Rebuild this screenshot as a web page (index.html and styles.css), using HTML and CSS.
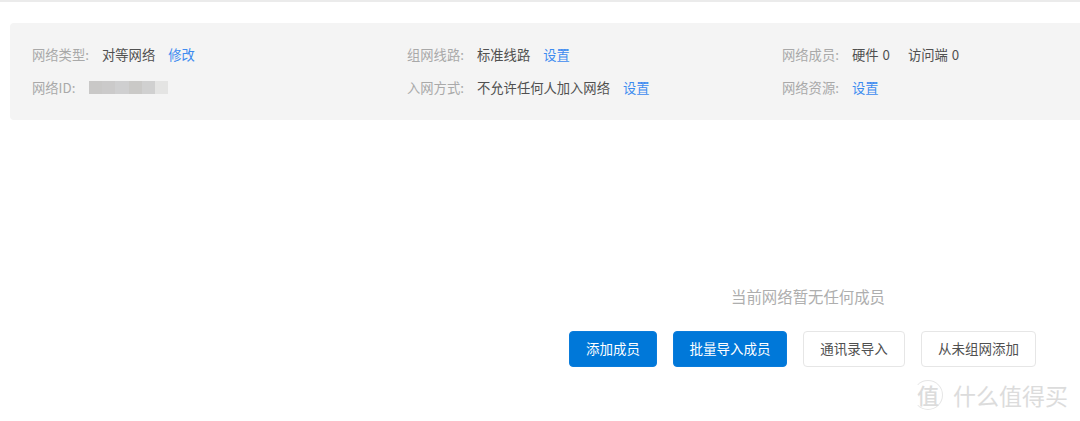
FILE: index.html
```html
<!DOCTYPE html>
<html lang="zh-CN">
<head>
<meta charset="utf-8">
<title>网络详情</title>
<link rel="stylesheet" href="styles.css">
</head>
<body>
<div class="page">
  <section class="info">
    <div class="item"><span class="label">网络类型:</span><span class="value">对等网络</span><a class="link">修改</a></div>
    <div class="item"><span class="label">组网线路:</span><span class="value">标准线路</span><a class="link">设置</a></div>
    <div class="item"><span class="label">网络成员:</span><span class="value count">硬件 0</span><span class="value count second">访问端 0</span></div>
    <div class="item"><span class="label">网络ID:</span><span class="mask"><i class="m1"></i><i class="m2"></i><i class="m3"></i><i class="m4"></i><i class="m5"></i><i class="m6"></i></span></div>
    <div class="item"><span class="label">入网方式:</span><span class="value">不允许任何人加入网络</span><a class="link">设置</a></div>
    <div class="item"><span class="label">网络资源:</span><a class="link flush">设置</a></div>
  </section>
  <section class="empty">
    <p class="empty-text">当前网络暂无任何成员</p>
    <div class="actions">
      <button class="btn primary w88">添加成员</button>
      <button class="btn primary w114">批量导入成员</button>
      <button class="btn w102">通讯录导入</button>
      <button class="btn w115">从未组网添加</button>
    </div>
  </section>
  <div class="watermark">
    <span class="wm-badge">值</span>
    <span class="wm-text">什么值得买</span>
  </div>
</div>
</body>
</html>
```
FILE: styles.css
```css
* { box-sizing: border-box; }
html, body { margin: 0; padding: 0; height: 100%; }
body {
  background: #fff;
  overflow: hidden;
  font-family: "Noto Sans CJK SC", "Liberation Sans", sans-serif;
}
.page {
  position: relative;
  height: 421px;
  border-top: 2px solid #ebebeb;
  padding: 21px 0 0 10px;
}
.info {
  display: grid;
  grid-template-columns: 375px 375px 1fr;
  grid-auto-rows: 33px;
  height: 97px;
  padding: 15px 0 0 22px;
  background: #f4f4f4;
  border-radius: 4px 0 0 4px;
  font-size: 13.3px;
}
.item { display: flex; align-items: center; white-space: nowrap; min-width: 0; }
.label { width: 70px; color: #a9a9a9; }
.value { color: #505050; }
.value.count { word-spacing: 1px; }
.value.second { margin-left: 18px; }
.link { margin-left: 13px; color: #3d8bf0; }
.link.flush { margin-left: 0; }
.mask { display: flex; margin-left: -13px; }
.mask i { display: block; width: 13.2px; height: 13px; }
.m1 { background: #c9c8c7; }
.m2 { background: #cbcaca; }
.m3 { background: #cfcfd0; }
.m4 { background: #cac9c7; }
.m5 { background: #d0d0d0; }
.m6 { background: #e4e4e3; }
.empty {
  display: flex;
  flex-direction: column;
  align-items: flex-end;
  margin-top: 166px;
  padding-right: 44px;
}
.empty-text {
  margin: 0 151px 0 0;
  height: 20px;
  line-height: 20px;
  font-size: 15.4px;
  color: #aeaeae;
}
.actions { display: flex; gap: 16px; margin-top: 25px; }
.btn {
  height: 36px;
  padding: 0 0 2px;
  border: 1px solid #e6e6e6;
  border-radius: 4px;
  background: #fff;
  color: #505050;
  font: inherit;
  font-size: 13.5px;
}
.btn.primary { background: #0078d9; border-color: #0a7cdb; color: #fff; }
.w88 { width: 88px; }
.w114 { width: 114px; }
.w102 { width: 102px; }
.w115 { width: 115px; }
.watermark {
  position: absolute;
  left: 913px;
  top: 378px;
  display: flex;
  align-items: center;
  gap: 10px;
  color: #dcdcdc;
}
.wm-badge {
  width: 30px;
  height: 30px;
  border: 1px solid #e6e6e6;
  border-left-color: transparent;
  border-radius: 50%;
  text-align: center;
  font-size: 22px;
  line-height: 26px;
  font-weight: 500;
}
.wm-text { font-size: 23px; line-height: 30px; }
```
